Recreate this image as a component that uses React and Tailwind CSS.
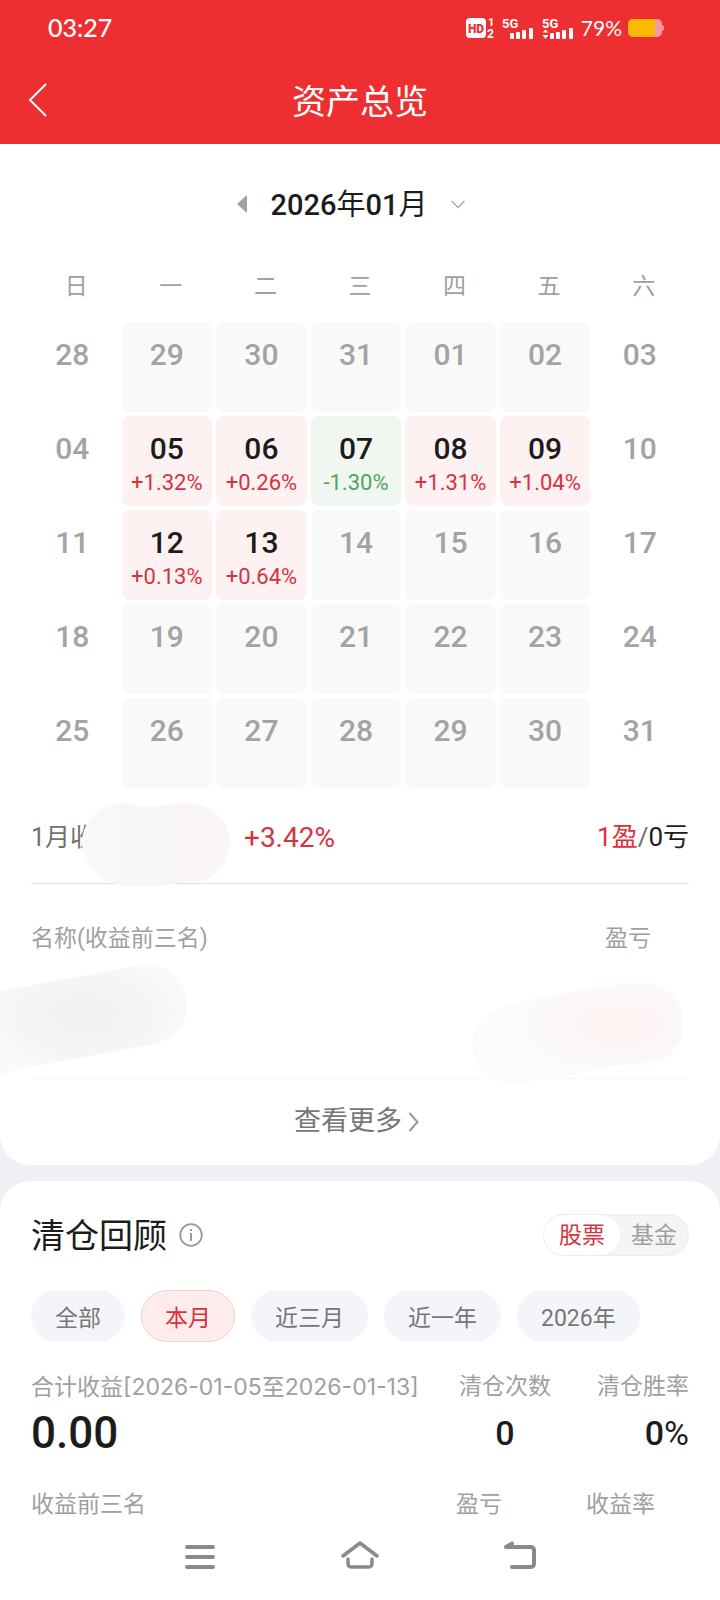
import React, { useState } from "react";

const WEEKDAYS = ["日", "一", "二", "三", "四", "五", "六"];

const WEEKS = [
  ["28", "29", "30", "31", "01", "02", "03"],
  ["04", "05", "06", "07", "08", "09", "10"],
  ["11", "12", "13", "14", "15", "16", "17"],
  ["18", "19", "20", "21", "22", "23", "24"],
  ["25", "26", "27", "28", "29", "30", "31"],
];

const RETURNS = {
  "1-1": "+1.32%",
  "1-2": "+0.26%",
  "1-3": "-1.30%",
  "1-4": "+1.31%",
  "1-5": "+1.04%",
  "2-1": "+0.13%",
  "2-2": "+0.64%",
};

const RANGES = ["全部", "本月", "近三月", "近一年", "2026年"];

function Signal({ roaming }) {
  return (
    <svg width="34" height="28" viewBox="0 -4 34 28" fill="#fff" aria-hidden="true">
      <text x="1" y="10" fontSize="13" fontWeight="700" fontFamily="Roboto, sans-serif">5G</text>
      {roaming && <path d="M1.500 14.500l3-3 3 3zM1.500 17h6l-3 4z" />}
      <rect x="9" y="15" width="4" height="6" rx="1" />
      <rect x="15" y="14" width="4" height="7" rx="1" />
      <rect x="21" y="12" width="4" height="9" rx="1" />
      <rect x="28" y="10" width="4" height="11" rx="1" />
    </svg>
  );
}

function StatusBar() {
  return (
    <div className="flex h-14 items-center justify-between pl-12 pr-14 font-[Lato,sans-serif]">
      <span className="text-[25px] font-medium">03:27</span>
      <div className="flex items-center gap-1.5">
        <svg width="29" height="28" viewBox="0 -3 29 28" aria-hidden="true">
          <rect x="0" y="1" width="20" height="20" rx="4" fill="#fff" />
          <text x="10" y="15.500" textAnchor="middle" fontSize="12" fontWeight="900" fontFamily="Roboto, sans-serif" fill="#ee2f32">HD</text>
          <text x="22" y="9" fontSize="11" fontWeight="700" fontFamily="Roboto, sans-serif" fill="#fff">1</text>
          <text x="21" y="21" fontSize="12" fontWeight="700" fontFamily="Roboto, sans-serif" fill="#fff">2</text>
        </svg>
        <Signal />
        <Signal roaming />
        <span className="text-[21px]">79%</span>
        <svg width="36" height="20" viewBox="0 0 36 20" aria-hidden="true">
          <path d="M5 1h24a5 5 0 0 1 5 5v1.500h1a1 1 0 0 1 1 1v3a1 1 0 0 1-1 1h-1V14a5 5 0 0 1-5 5H5a5 5 0 0 1-5-5V6a5 5 0 0 1 5-5z" fill="#f79a9b" />
          <path d="M5 1h22v18H5a5 5 0 0 1-5-5V6a5 5 0 0 1 5-5z" fill="#ffb800" />
        </svg>
      </div>
    </div>
  );
}

function DayCell({ day, value, weekend }) {
  const tone = !value
    ? weekend
      ? "text-[#a3a3a3]"
      : "bg-[#f9f9f9] text-[#a3a3a3]"
    : value.startsWith("-")
      ? "bg-[#eff7f0] text-[#1c1c1c]"
      : "bg-[#fef1f2] text-[#1c1c1c]";
  const valueTone = value && value.startsWith("-") ? "text-[#4fa660]" : "text-[#d5333f]";
  return (
    <td className={`h-[90px] rounded-lg p-0 pt-[13px] text-center align-top ${tone}`}>
      <div className="text-[30px] leading-10 font-medium">{day}</div>
      {value && <div className={`text-[22px] leading-7 ${valueTone}`}>{value}</div>}
    </td>
  );
}

function Calendar() {
  return (
    <div className="pl-[23px] pr-[31px]">
      <table className="w-full table-fixed border-separate border-spacing-1">
        <thead>
          <tr>
            {WEEKDAYS.map((d) => (
              <th key={d} scope="col" className="h-[66px] p-0 pt-1 pl-2 text-[23px] font-normal text-[#a0a0a0]">{d}</th>
            ))}
          </tr>
        </thead>
        <tbody>
          {WEEKS.map((week, w) => (
            <tr key={w}>
              {week.map((day, d) => (
                <DayCell key={d} day={day} value={RETURNS[`${w}-${d}`]} weekend={d === 0 || d === 6} />
              ))}
            </tr>
          ))}
        </tbody>
      </table>
    </div>
  );
}

function MonthSummary() {
  return (
    <div className="relative mx-[31px] flex h-[92px] items-center border-b border-[#dedede] text-[26px]">
      <span className="w-[213px] text-[25px] text-[#707070]">1月收</span>
      <span className="text-[28px] text-[#d5333f]">+3.42%</span>
      <span className="ml-auto text-[#1c1c1c]">
        <span className="text-[#e02f3b]">1盈</span>
        <span className="text-[#707070]">/</span>0亏
      </span>
      <svg className="absolute left-[51px] top-[11px]" width="148" height="84" viewBox="0 0 148 84" aria-hidden="true">
        <defs>
          <linearGradient id="smear-a" x1="0" y1="0" x2="1" y2="0">
            <stop offset="0" stopColor="#f9f9f9" />
            <stop offset="0.45" stopColor="#f8f6f6" />
            <stop offset="0.8" stopColor="#faf5f5" />
            <stop offset="1" stopColor="#faf7f7" />
          </linearGradient>
        </defs>
        <path d="M42 0C52 0 56 4 64 4C76 4 86 0 104 0C130 0 148 18 148 40C148 62 130 79 108 79C92 79 86 84 62 84C50 84 38 84 28 78C10 70 0 56 0 40C0 18 18 0 42 0Z" fill="url(#smear-a)" />
      </svg>
    </div>
  );
}

function TopThree() {
  return (
    <div className="relative">
      <div className="px-[31px]">
        <table className="w-full border-collapse text-[23px]">
          <thead>
            <tr className="h-[108px] text-[#a0a0a0]">
              <th scope="col" className="p-0 pt-0.5 text-left font-normal">名称(收益前三名)</th>
              <th scope="col" className="p-0 pt-0.5 pr-[38px] text-right font-normal">盈亏</th>
            </tr>
          </thead>
          <tbody>
            <tr className="h-[86px] border-b border-[#f6f6f6]">
              <td />
              <td />
            </tr>
          </tbody>
        </table>
      </div>
      <svg className="absolute left-0 top-20" width="188" height="112" viewBox="0 0 188 112" aria-hidden="true">
        <defs>
          <radialGradient id="smear-b" cx="0.45" cy="0.45" r="0.6">
            <stop offset="0" stopColor="#f1f1f1" />
            <stop offset="0.4" stopColor="#f3f3f3" />
            <stop offset="1" stopColor="#fafafa" />
          </radialGradient>
        </defs>
        <path d="M0 27C8 24 14 24 22 23L130 3C134 2 140 1 147 1C170 1 187 19 187 42C187 62 172 77 150 81L36 102C20 104 10 107 0 111Z" fill="url(#smear-b)" />
      </svg>
      <svg className="absolute right-9 top-[98px]" width="212" height="104" viewBox="0 0 212 104" aria-hidden="true">
        <defs>
          <radialGradient id="smear-c" cx="0.7" cy="0.42" r="0.6">
            <stop offset="0" stopColor="#fef2f2" />
            <stop offset="0.4" stopColor="#fcf6f6" />
            <stop offset="1" stopColor="#fcfcfc" />
          </radialGradient>
        </defs>
        <path d="M40 22L76 14L140 3C152 1 160 1 173 1C196 1 211 20 211 42C211 64 196 81 173 81C162 81 156 82 150 83L64 98C56 100 50 102 38 102C16 100 0 84 0 62C0 42 18 26 40 22Z" fill="url(#smear-c)" />
      </svg>
      <button type="button" className="flex h-[86px] w-full items-center justify-center gap-1.5 pr-1.5 text-[27px] text-[#777777]">
        查看更多
        <svg width="12" height="20" viewBox="0 0 12 20" fill="none" stroke="#999" strokeWidth="2" aria-hidden="true">
          <path d="M1.500 1l8 9-8 9" />
        </svg>
      </button>
    </div>
  );
}

function Review() {
  const [kind, setKind] = useState("股票");
  const [range, setRange] = useState("本月");
  return (
    <section className="flex-1 rounded-t-[30px] bg-white px-[31px] pt-[33px]">
      <div className="flex items-center">
        <h2 className="pt-0.5 text-[34px] leading-10 text-[#1c1c1c]">清仓回顾</h2>
        <button type="button" aria-label="说明" className="ml-3">
          <svg width="24" height="24" viewBox="0 0 24 24" fill="none" stroke="#999" strokeWidth="2">
            <circle cx="12" cy="12" r="10.800" strokeWidth="1.800" />
            <path d="M12 10v8M12 6v2" />
          </svg>
        </button>
        <div className="ml-auto flex h-[42px] overflow-hidden rounded-full border border-[#ececec] bg-[#f3f4f6] text-[23px]">
          {["股票", "基金"].map((k) => (
            <button
              key={k}
              type="button"
              aria-pressed={kind === k}
              onClick={() => setKind(k)}
              className={kind === k ? "rounded-full bg-white px-[15px] pt-1 text-[#d5333f]" : "px-[11px] pt-1 text-[#a0a0a0]"}
            >
              {k}
            </button>
          ))}
        </div>
      </div>
      <div className="mt-[34px] flex gap-4 text-[23px]">
        {RANGES.map((r) => (
          <button
            key={r}
            type="button"
            aria-pressed={range === r}
            onClick={() => setRange(r)}
            className={`h-[52px] rounded-full border px-[23px] pt-2 ${
              range === r ? "border-[#f7cfcb] bg-[#feecec] text-[#d9303c]" : "border-[#f4f5fa] bg-[#f4f5fa] text-[#777777]"
            }`}
          >
            {r}
          </button>
        ))}
      </div>
      <dl className="mt-[29px] flex text-[23px] text-[#a0a0a0]">
        <div className="flex-1">
          <dt className="whitespace-nowrap font-[Inter,'Noto_Sans_CJK_SC',sans-serif] leading-8">合计收益[2026-01-05至2026-01-13]</dt>
          <dd className="text-[44px] leading-[60px] font-medium text-[#1c1c1c]">0.00</dd>
        </div>
        <div className="text-center">
          <dt className="leading-8">清仓次数</dt>
          <dd className="text-[34px] leading-[60px] font-medium text-[#1c1c1c]">0</dd>
        </div>
        <div className="ml-[46px] text-right">
          <dt className="leading-8">清仓胜率</dt>
          <dd className="text-[34px] leading-[60px] text-[#1c1c1c]"><span className="font-medium">0</span>%</dd>
        </div>
      </dl>
      <table className="mt-[26px] w-full text-[23px] leading-8 text-[#a0a0a0]">
        <thead>
          <tr>
            <th scope="col" className="p-0 text-left font-normal">收益前三名</th>
            <th scope="col" className="p-0 text-right font-normal">盈亏</th>
            <th scope="col" className="w-[187px] p-0 pr-[34px] text-right font-normal">收益率</th>
          </tr>
        </thead>
      </table>
    </section>
  );
}

function SystemNav() {
  return (
    <nav className="flex h-[80px] items-start justify-center gap-[120px] bg-white pt-5">
      <button type="button" aria-label="最近任务">
        <svg width="40" height="32" viewBox="0 0 40 32" fill="none" stroke="#8a8a8a" strokeWidth="4" strokeLinecap="round">
          <path d="M7 6h26M7 16h26M7 26h26" />
        </svg>
      </button>
      <button type="button" aria-label="主页">
        <svg width="40" height="32" viewBox="0 0 40 32" fill="none" stroke="#8a8a8a" strokeWidth="3.500" strokeLinecap="round" strokeLinejoin="round">
          <path d="M3 15L20 2L37 15" />
          <path d="M8 18v5a3 3 0 0 0 3 3h18a3 3 0 0 0 3-3v-5" />
        </svg>
      </button>
      <button type="button" aria-label="返回">
        <svg width="40" height="32" viewBox="0 0 40 32" fill="none" stroke="#8a8a8a" strokeWidth="4" strokeLinecap="round" strokeLinejoin="round">
          <path d="M12 2.500L6 6H31a3 3 0 0 1 3 3V23a3 3 0 0 1-3 3H12" />
        </svg>
      </button>
    </nav>
  );
}

export default function App() {
  return (
    <div className="flex min-h-screen flex-col bg-[#f0eff4] font-[Roboto,'Noto_Sans_CJK_SC',sans-serif]">
      <header className="bg-[#ee2f32] text-white">
        <StatusBar />
        <div className="grid h-[88px] grid-cols-[80px_1fr_80px] items-center">
          <button type="button" aria-label="返回" className="pl-7">
            <svg width="20" height="34" viewBox="0 0 20 34" fill="none" stroke="#fff" strokeWidth="2">
              <path d="M18 1L2 17l16 16" />
            </svg>
          </button>
          <h1 className="pt-1 text-center text-[34px]">资产总览</h1>
        </div>
      </header>
      <section className="rounded-b-[30px] bg-white pt-10">
        <div className="flex h-10 items-center justify-center gap-6 pr-[18px]">
          <button type="button" aria-label="上个月">
            <svg width="10" height="18" viewBox="0 0 10 18" fill="#a0a0a0">
              <path d="M10 0v18L0 9z" />
            </svg>
          </button>
          <button type="button" className="flex items-center gap-6 text-[29px] text-[#1c1c1c]">
            <span className="pt-1"><span className="font-medium">2026</span>年<span className="font-medium">01</span>月</span>
            <svg width="14" height="9" viewBox="0 0 14 9" fill="none" stroke="#aaa" strokeWidth="1.500" aria-hidden="true">
              <path d="M.5 1L7 7.500L13.500 1" />
            </svg>
          </button>
        </div>
        <div className="mt-6">
          <Calendar />
        </div>
        <MonthSummary />
        <TopThree />
      </section>
      <div className="h-4" />
      <Review />
      <SystemNav />
    </div>
  );
}
